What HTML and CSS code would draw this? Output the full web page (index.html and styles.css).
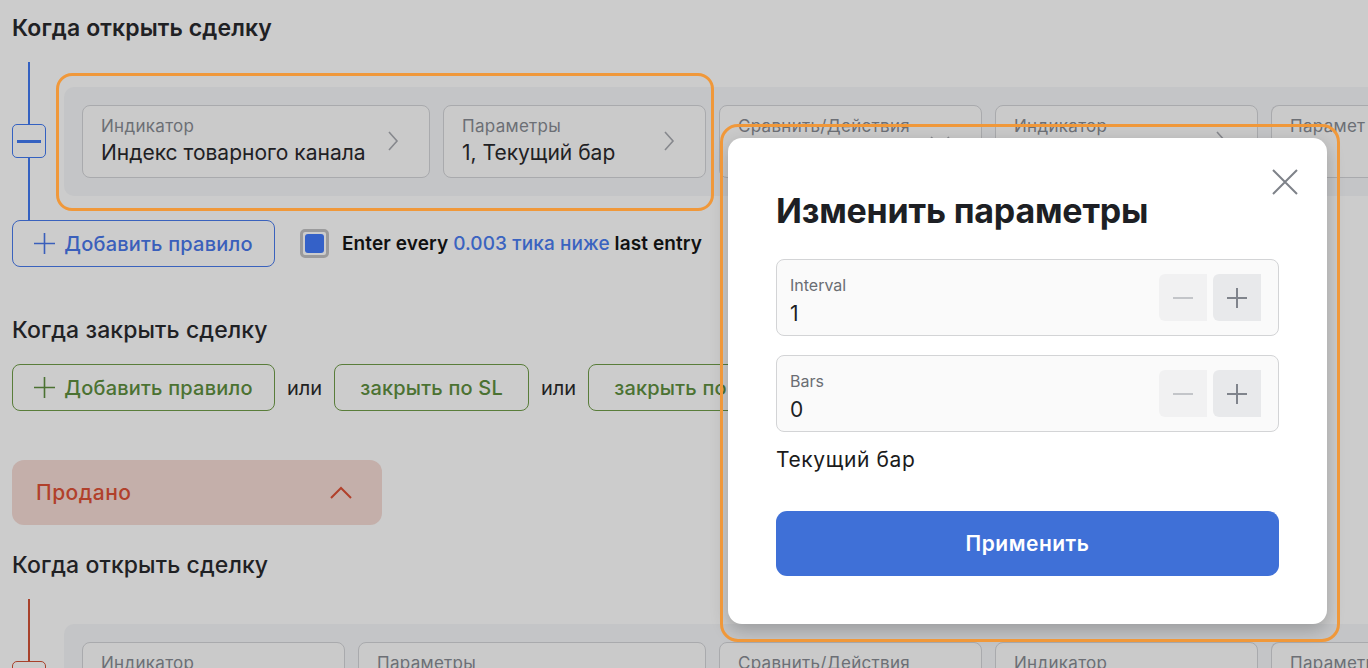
FILE: index.html
```html
<!DOCTYPE html>
<html lang="ru">
<head>
    <meta charset="UTF-8">
    <meta name="viewport" content="width=device-width, initial-scale=1.0">
    <title>Стратегия — изменить параметры</title>
    <link rel="stylesheet" href="styles.css">
</head>
<body>

    <div class="page">

        <!-- Покупка: когда открыть -->
        <h2 class="section-title section-title--main">Когда открыть сделку</h2>

        <div class="rule">
            <div class="rail">
                <span class="rail-line"></span>
                <button class="rail-toggle" aria-label="Свернуть"><span></span></button>
                <span class="rail-line"></span>
            </div>
            <div class="rule-row">
                <div class="card card--wide">
                    <div class="card-text">
                        <div class="card-label">Индикатор</div>
                        <div class="card-value">Индекс товарного канала</div>
                    </div>
                    <svg class="chevron" width="12" height="22" viewBox="0 0 12 22"><path d="M2 2l8 9-8 9" /></svg>
                </div>
                <div class="card">
                    <div class="card-text">
                        <div class="card-label">Параметры</div>
                        <div class="card-value">1, Текущий бар</div>
                    </div>
                    <svg class="chevron" width="12" height="22" viewBox="0 0 12 22"><path d="M2 2l8 9-8 9" /></svg>
                </div>
                <div class="card">
                    <div class="card-text">
                        <div class="card-label">Сравнить/Действия</div>
                        <div class="card-value">Пересекает</div>
                    </div>
                    <svg class="chevron" width="22" height="12" viewBox="0 0 22 12"><path d="M2 2l9 8 9-8" /></svg>
                </div>
                <div class="card">
                    <div class="card-text">
                        <div class="card-label">Индикатор</div>
                        <div class="card-value">Цена</div>
                    </div>
                    <svg class="chevron" width="12" height="22" viewBox="0 0 12 22"><path d="M2 2l8 9-8 9" /></svg>
                </div>
                <div class="card card--cut">
                    <div class="card-text">
                        <div class="card-label">Парамет</div>
                        <div class="card-value">&nbsp;</div>
                    </div>
                </div>
            </div>
            <div class="highlight highlight--rule"></div>
        </div>

        <div class="actions">
            <button class="btn btn--blue">
                <svg width="21" height="21" viewBox="0 0 21 21"><path d="M10.5 0v21M0 10.5h21" /></svg>
                Добавить правило
            </button>
            <label class="check">
                <span class="check-box"><span></span></span>
                <span class="check-text">Enter every <span class="check-link">0.003 тика ниже</span> last entry</span>
            </label>
        </div>

        <!-- Покупка: когда закрыть -->
        <h2 class="section-title">Когда закрыть сделку</h2>

        <div class="actions">
            <button class="btn btn--green">
                <svg width="21" height="21" viewBox="0 0 21 21"><path d="M10.5 0v21M0 10.5h21" /></svg>
                Добавить правило
            </button>
            <span class="or">или</span>
            <button class="btn btn--green">закрыть по SL</button>
            <span class="or">или</span>
            <button class="btn btn--green">закрыть по TP</button>
        </div>

        <!-- Продажа -->
        <div class="side-toggle">
            <span>Продано</span>
            <svg width="22" height="14" viewBox="0 0 22 14"><path d="M1 12l10-10 10 10" /></svg>
        </div>

        <h2 class="section-title">Когда открыть сделку</h2>

        <div class="rule rule--sell">
            <div class="rail">
                <span class="rail-line"></span>
                <button class="rail-toggle" aria-label="Свернуть"><span></span></button>
                <span class="rail-line"></span>
            </div>
            <div class="rule-row">
                <div class="card">
                    <div class="card-text">
                        <div class="card-label">Индикатор</div>
                        <div class="card-value">Индекс товарного</div>
                    </div>
                    <svg class="chevron" width="12" height="22" viewBox="0 0 12 22"><path d="M2 2l8 9-8 9" /></svg>
                </div>
                <div class="card card--wide">
                    <div class="card-text">
                        <div class="card-label">Параметры</div>
                        <div class="card-value">1, Текущий бар</div>
                    </div>
                    <svg class="chevron" width="12" height="22" viewBox="0 0 12 22"><path d="M2 2l8 9-8 9" /></svg>
                </div>
                <div class="card">
                    <div class="card-text">
                        <div class="card-label">Сравнить/Действия</div>
                        <div class="card-value">Пересекает</div>
                    </div>
                    <svg class="chevron" width="22" height="12" viewBox="0 0 22 12"><path d="M2 2l9 8 9-8" /></svg>
                </div>
                <div class="card">
                    <div class="card-text">
                        <div class="card-label">Индикатор</div>
                        <div class="card-value">Цена</div>
                    </div>
                    <svg class="chevron" width="12" height="22" viewBox="0 0 12 22"><path d="M2 2l8 9-8 9" /></svg>
                </div>
                <div class="card card--cut">
                    <div class="card-text">
                        <div class="card-label">Параметры</div>
                        <div class="card-value">&nbsp;</div>
                    </div>
                </div>
            </div>
        </div>
    </div>

    <!-- Модальное окно -->
    <div class="highlight highlight--modal"></div>
    <div class="modal">
        <button class="modal-close" aria-label="Закрыть">
            <svg width="26" height="26" viewBox="0 0 26 26"><path d="M1 1l24 24M25 1L1 25" /></svg>
        </button>
        <h3 class="modal-title">Изменить параметры</h3>

        <div class="field">
            <div class="field-text">
                <div class="field-label">Interval</div>
                <div class="field-value">1</div>
            </div>
            <div class="stepper">
                <button class="stepper-btn stepper-btn--off" aria-label="Уменьшить">
                    <svg width="20" height="20" viewBox="0 0 20 20"><path d="M0 10h20" /></svg>
                </button>
                <button class="stepper-btn" aria-label="Увеличить">
                    <svg width="20" height="20" viewBox="0 0 20 20"><path d="M10 0v20M0 10h20" /></svg>
                </button>
            </div>
        </div>

        <div class="field">
            <div class="field-text">
                <div class="field-label">Bars</div>
                <div class="field-value">0</div>
            </div>
            <div class="stepper">
                <button class="stepper-btn stepper-btn--off" aria-label="Уменьшить">
                    <svg width="20" height="20" viewBox="0 0 20 20"><path d="M0 10h20" /></svg>
                </button>
                <button class="stepper-btn" aria-label="Увеличить">
                    <svg width="20" height="20" viewBox="0 0 20 20"><path d="M10 0v20M0 10h20" /></svg>
                </button>
            </div>
        </div>

        <p class="modal-hint">Текущий бар</p>

        <button class="btn-apply">Применить</button>
    </div>

</body>
</html>
```

FILE: styles.css
```css
* {
    box-sizing: border-box;
    margin: 0;
    padding: 0;
}

body {
    position: relative;
    width: 1368px;
    height: 668px;
    overflow: hidden;
    background-color: #cccccc;
    font-family: Inter, "Noto Sans", sans-serif;
    color: #1f2124;
}

button {
    font: inherit;
    background: none;
    border: none;
}

.page {
    padding: 14px 0 0 12px;
}

/* Section headings */
.section-title {
    font-size: 23px;
    line-height: 28px;
    font-weight: 500;
    letter-spacing: 0.1px;
    margin-bottom: 20px;
}

.section-title--main {
    font-weight: 600;
}

/* Rule block with rail and cards */
.rule {
    position: relative;
    display: flex;
    align-items: center;
    gap: 18px;
}

.rail {
    display: flex;
    flex-direction: column;
    align-items: center;
    width: 34px;
    height: 158px;
    flex: none;
}

.rail-line {
    flex: 1;
    width: 2px;
    background-color: #3461c1;
}

.rail-toggle {
    width: 34px;
    height: 34px;
    border: 1px solid #3461c1;
    border-radius: 5px;
    display: flex;
    align-items: center;
    justify-content: center;
}

.rail-toggle span {
    width: 24px;
    height: 3px;
    background-color: #3461c1;
}

.rule--sell .rail-line {
    background-color: #a8412b;
}

.rule--sell .rail-toggle {
    border-color: #a8412b;
}

.rule--sell .rail-toggle span {
    background-color: transparent;
}

.rule-row {
    display: flex;
    gap: 13px;
    flex: none;
    padding: 18px;
    background-color: #c4c5c7;
    border-radius: 10px 0 0 10px;
}

.card {
    width: 263px;
    height: 73px;
    flex: none;
    display: flex;
    align-items: center;
    justify-content: space-between;
    padding: 0 30px 0 18px;
    background-color: #cacaca;
    border: 1px solid #a9aaad;
    border-radius: 8px;
    white-space: nowrap;
}

.card--wide {
    width: 348px;
}

.card--cut {
    width: 97px;
    border-right: none;
    border-radius: 8px 0 0 8px;
    overflow: hidden;
    padding-right: 0;
}

.card-text {
    margin-top: -1px;
}

.card-label {
    font-size: 17px;
    line-height: 22px;
    letter-spacing: 0.3px;
    color: #6c6f75;
    margin-bottom: 3px;
}

.card-value {
    font-size: 21px;
    line-height: 26px;
    color: #1f2124;
}

.chevron {
    flex: none;
}

.chevron path {
    fill: none;
    stroke: #86888d;
    stroke-width: 1.6;
}

/* Orange annotation frames */
.highlight {
    position: absolute;
    border: 3px solid #f0983a;
    border-radius: 16px;
    z-index: 5;
    pointer-events: none;
}

.highlight--rule {
    left: 44px;
    top: 11px;
    width: 658px;
    height: 138px;
}

.highlight--modal {
    left: 720px;
    top: 124px;
    width: 620px;
    height: 518px;
    border-radius: 18px;
}

/* Buttons row */
.actions {
    display: flex;
    align-items: center;
    gap: 12px;
}

.btn {
    height: 47px;
    display: flex;
    align-items: center;
    justify-content: center;
    gap: 9px;
    padding: 0 25px;
    border-radius: 8px;
    font-size: 20px;
    font-weight: 500;
    letter-spacing: 0.2px;
    white-space: nowrap;
}

.btn svg {
    flex: none;
}

.btn svg path {
    fill: none;
    stroke-width: 1.6;
}

.btn--blue {
    width: 263px;
    border: 1px solid #3a62bd;
    color: #3a5fbb;
}

.btn--blue svg path {
    stroke: #3a5fbb;
}

.btn--green {
    border: 1px solid #597d3a;
    color: #4b7232;
}

.btn--green:first-child {
    width: 263px;
}

.btn--green svg path {
    stroke: #4b7232;
}

.or {
    font-size: 20px;
    color: #222;
}

.check {
    display: flex;
    align-items: center;
    gap: 13px;
    margin-left: 13px;
}

.check-text {
    font-size: 19px;
    font-weight: 600;
    letter-spacing: 0.1px;
    color: #111;
    white-space: nowrap;
}

.check-box {
    width: 29px;
    height: 29px;
    border: 3px solid #9b9b9c;
    border-radius: 5px;
    display: flex;
    align-items: center;
    justify-content: center;
}

.check-box span {
    width: 19px;
    height: 19px;
    border-radius: 3px;
    background-color: #3461c8;
}

.check-link {
    color: #3a63c0;
    font-weight: 500;
}

/* Продано */
.side-toggle {
    width: 370px;
    height: 65px;
    margin: 49px 0 26px;
    padding: 0 30px 0 24px;
    display: flex;
    align-items: center;
    justify-content: space-between;
    background-color: #c4afaa;
    border-radius: 12px;
    font-size: 21px;
    font-weight: 500;
    letter-spacing: 0.5px;
    color: #b1402b;
}

.side-toggle path {
    fill: none;
    stroke: #b1402b;
    stroke-width: 2;
}

.actions + .section-title {
    margin-top: 49px;
}

/* Modal */
.modal {
    position: absolute;
    left: 728px;
    top: 138px;
    width: 599px;
    padding: 51px 48px 48px;
    background-color: #fff;
    border-radius: 14px;
    box-shadow: 0 6px 18px rgba(0, 0, 0, 0.22);
    z-index: 4;
}

.modal-close {
    position: absolute;
    top: 31px;
    right: 29px;
    width: 26px;
    height: 26px;
}

.modal-close path {
    fill: none;
    stroke: #7e8289;
    stroke-width: 2;
}

.modal-title {
    font-size: 34px;
    line-height: 44px;
    font-weight: 700;
    letter-spacing: -0.2px;
    color: #1d1f24;
    margin-bottom: 26px;
}

.field {
    height: 77px;
    display: flex;
    align-items: center;
    justify-content: space-between;
    padding: 0 17px 0 13px;
    margin-bottom: 19px;
    background-color: #fafafa;
    border: 1px solid #d3d4d6;
    border-radius: 8px;
}

.field-text {
    margin-top: 7px;
}

.field-label {
    font-size: 16px;
    line-height: 22px;
    color: #6a6d73;
    margin-bottom: 4px;
}

.field-value {
    font-size: 21px;
    line-height: 28px;
    color: #1d1f24;
}

.stepper {
    display: flex;
    gap: 6px;
}

.stepper-btn {
    width: 48px;
    height: 47px;
    display: flex;
    align-items: center;
    justify-content: center;
    border-radius: 6px 0 0 6px;
    background-color: #e8e9eb;
}

.stepper-btn path {
    fill: none;
    stroke: #80848c;
    stroke-width: 2;
}

.stepper-btn--off {
    background-color: #f1f1f2;
}

.stepper-btn--off path {
    stroke: #c3c5c9;
}

.modal-hint {
    font-size: 21px;
    line-height: 28px;
    letter-spacing: 0.6px;
    color: #1b1b1b;
    margin: -5px 0 37px;
}

.btn-apply {
    width: 100%;
    height: 65px;
    border-radius: 11px;
    background-color: #3f70d7;
    color: #fff;
    font-size: 21px;
    font-weight: 600;
    letter-spacing: 0.5px;
}
```
